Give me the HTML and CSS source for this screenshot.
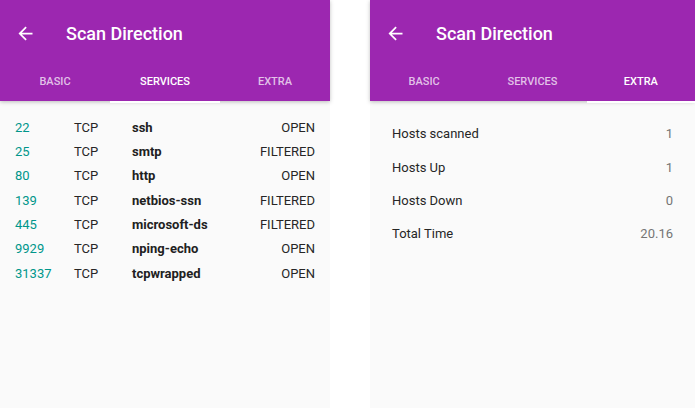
FILE: index.html
```html
<!DOCTYPE html>
<html>
<head>
<meta charset="utf-8">
<link rel="stylesheet" href="styles.css">
</head>
<body>
<div class="screens">
  <section class="phone phone-left">
    <header class="appbar">
      <div class="toolbar">
        <svg class="back" viewBox="0 0 24 24" width="21" height="21"><path d="M20 11H7.83l5.59-5.59L12 4l-8 8 8 8 1.41-1.41L7.83 13H20v-2z" fill="#fff"/></svg>
        <h1 class="title">Scan Direction</h1>
      </div>
      <nav class="tabs">
        <div class="tab">BASIC</div>
        <div class="tab active">SERVICES</div>
        <div class="tab">EXTRA</div>
      </nav>
    </header>
    <div class="services">
      <div class="svc"><span class="port">22</span><span class="proto">TCP</span><span class="name">ssh</span><span class="state">OPEN</span></div>
      <div class="svc"><span class="port">25</span><span class="proto">TCP</span><span class="name">smtp</span><span class="state">FILTERED</span></div>
      <div class="svc"><span class="port">80</span><span class="proto">TCP</span><span class="name">http</span><span class="state">OPEN</span></div>
      <div class="svc"><span class="port">139</span><span class="proto">TCP</span><span class="name">netbios-ssn</span><span class="state">FILTERED</span></div>
      <div class="svc"><span class="port">445</span><span class="proto">TCP</span><span class="name">microsoft-ds</span><span class="state">FILTERED</span></div>
      <div class="svc"><span class="port">9929</span><span class="proto">TCP</span><span class="name">nping-echo</span><span class="state">OPEN</span></div>
      <div class="svc"><span class="port">31337</span><span class="proto">TCP</span><span class="name">tcpwrapped</span><span class="state">OPEN</span></div>
    </div>
  </section>
  <section class="phone phone-right">
    <header class="appbar">
      <div class="toolbar">
        <svg class="back" viewBox="0 0 24 24" width="21" height="21"><path d="M20 11H7.83l5.59-5.59L12 4l-8 8 8 8 1.41-1.41L7.83 13H20v-2z" fill="#fff"/></svg>
        <h1 class="title">Scan Direction</h1>
      </div>
      <nav class="tabs">
        <div class="tab">BASIC</div>
        <div class="tab">SERVICES</div>
        <div class="tab active">EXTRA</div>
      </nav>
    </header>
    <div class="stats">
      <div class="stat"><span class="label">Hosts scanned</span><span class="value">1</span></div>
      <div class="stat"><span class="label">Hosts Up</span><span class="value">1</span></div>
      <div class="stat"><span class="label">Hosts Down</span><span class="value">0</span></div>
      <div class="stat"><span class="label">Total Time</span><span class="value">20.16</span></div>
    </div>
  </section>
</div>
</body>
</html>
```

FILE: styles.css
```css
* { box-sizing: border-box; }
html, body { margin: 0; padding: 0; background: #ffffff; }
body { font-family: Roboto, "Liberation Sans", sans-serif; width: 695px; height: 408px; overflow: hidden; }

.screens { display: flex; gap: 40px; height: 408px; }
.phone { background: #fafafa; height: 408px; display: flex; flex-direction: column; }
.phone-left { width: 330px; }
.phone-right { flex: 1; }

.appbar {
  background: #9c27b0;
  height: 101px;
  display: flex;
  flex-direction: column;
  box-shadow: 0 1px 4px rgba(0,0,0,0.25);
  position: relative;
  z-index: 1;
}
.toolbar { height: 66px; display: flex; align-items: center; padding-left: 15px; }
.back { display: block; margin-top: 0px; }
.title {
  margin: 0 0 0 30px;
  font-size: 18px;
  font-weight: 500;
  color: #ffffff;
  letter-spacing: 0;
}
.tabs { flex: 1; display: flex; }
.tab {
  flex: 1;
  display: flex;
  align-items: center;
  justify-content: center;
  padding-bottom: 4px;
  font-size: 11px;
  font-weight: 500;
  color: rgba(255,255,255,0.72);
  position: relative;
}
.tab.active { color: #ffffff; }
.tab.active::after {
  content: "";
  position: absolute;
  left: 0; right: 0; bottom: -2px;
  height: 2px;
  background: #ffffff;
}

.services { padding: 14px 15px 0 15px; }
.svc {
  display: grid;
  grid-template-columns: 59px 58px 1fr auto;
  height: 24.35px;
  align-items: center;
  font-size: 13px;
  color: #212121;
}
.port { color: #00968a; }
.proto { color: #262626; }
.name { font-weight: 700; color: #212121; }
.state { text-align: right; color: #262626; }

.stats { padding: 16px 22px 0 22px; }
.stat {
  display: flex;
  justify-content: space-between;
  align-items: center;
  height: 33.35px;
  font-size: 13px;
}
.label { color: #262626; }
.value { color: #757575; }
```
